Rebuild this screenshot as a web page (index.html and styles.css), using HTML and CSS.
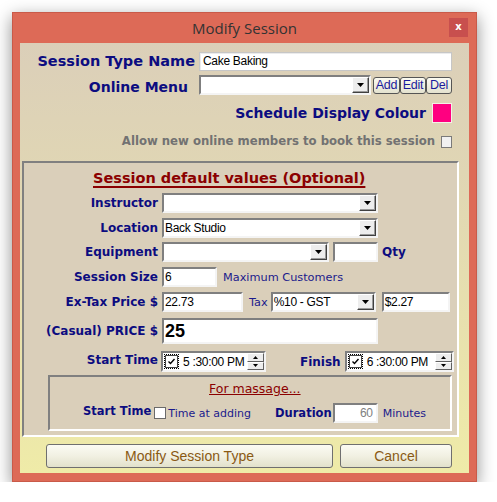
FILE: index.html
```html
<!DOCTYPE html>
<html>
<head>
<meta charset="utf-8">
<title>Modify Session</title>
<link rel="stylesheet" href="styles.css">
</head>
<body>
<div class="window">
  <div class="titlebar">
    <span class="tb-spacer"></span>
    <span class="tb-title">Modify Session</span>
    <span class="tb-close">x</span>
  </div>
  <div class="client">
    <div class="top">
      <div class="row r1">
        <span class="lbl big xl">Session Type Name</span>
        <div class="field flat w253">Cake Baking</div>
      </div>
      <div class="row r2">
        <span class="lbl big menu-lbl">Online Menu</span>
        <div class="combo w172"><span class="combo-text"></span><span class="ddbtn"><svg width="7" height="4" viewBox="0 0 7 4"><polygon points="0,0 7,0 3.5,4" fill="#000"/></svg></span></div>
        <div class="btngroup">
          <span class="sbtn w27">Add</span><span class="sbtn w26">Edit</span><span class="sbtn w26">Del</span>
        </div>
      </div>
      <div class="row r3">
        <span class="lbl big">Schedule Display Colour</span>
        <span class="swatch"></span>
      </div>
      <div class="row r4">
        <span class="lbl gray">Allow new online members to book this session</span>
        <span class="chk light"></span>
      </div>
    </div>

    <div class="group">
      <div class="g-title">Session default values (Optional)</div>

      <div class="frow mt5">
        <span class="flbl">Instructor</span>
        <div class="combo w216"><span class="combo-text"></span><span class="ddbtn"><svg width="7" height="4" viewBox="0 0 7 4"><polygon points="0,0 7,0 3.5,4" fill="#000"/></svg></span></div>
      </div>
      <div class="frow mt5">
        <span class="flbl">Location</span>
        <div class="combo w216"><span class="combo-text">Back Studio</span><span class="ddbtn"><svg width="7" height="4" viewBox="0 0 7 4"><polygon points="0,0 7,0 3.5,4" fill="#000"/></svg></span></div>
      </div>
      <div class="frow mt4">
        <span class="flbl">Equipment</span>
        <div class="combo w167"><span class="combo-text"></span><span class="ddbtn"><svg width="7" height="4" viewBox="0 0 7 4"><polygon points="0,0 7,0 3.5,4" fill="#000"/></svg></span></div>
        <div class="field w45 ml4"></div>
        <span class="slbl ml4">Qty</span>
      </div>
      <div class="frow mt5">
        <span class="flbl">Session Size</span>
        <div class="field w55">6</div>
        <span class="note ml6">Maximum Customers</span>
      </div>
      <div class="frow mt5">
        <span class="flbl">Ex-Tax Price $</span>
        <div class="field w81">22.73</div>
        <span class="note ml6">Tax</span>
        <div class="combo w105 ml3"><span class="combo-text">%10 - GST</span><span class="ddbtn"><svg width="7" height="4" viewBox="0 0 7 4"><polygon points="0,0 7,0 3.5,4" fill="#000"/></svg></span></div>
        <div class="field w68 ml6">$2.27</div>
      </div>
      <div class="frow mt6 h26">
        <span class="flbl">(Casual) PRICE $</span>
        <div class="field w216 h26 price">25</div>
      </div>
      <div class="frow mt7 h21">
        <span class="flbl tlbl">Start Time</span>
        <div class="picker w105">
          <span class="pchk"><svg width="9" height="9" viewBox="0 0 9 9"><polyline points="1.5,4.5 3.5,6.5 7.5,2" fill="none" stroke="#000" stroke-width="1.4"/></svg></span>
          <span class="ptext">5 :30:00 PM</span>
          <span class="spin"><span class="sp"><svg width="5" height="3" viewBox="0 0 5 3"><polygon points="0,3 5,3 2.5,0" fill="#000"/></svg></span><span class="sp"><svg width="5" height="3" viewBox="0 0 5 3"><polygon points="0,0 5,0 2.5,3" fill="#000"/></svg></span></span>
        </div>
        <span class="slbl finish">Finish</span>
        <div class="picker w109">
          <span class="pchk"><svg width="9" height="9" viewBox="0 0 9 9"><polyline points="1.5,4.5 3.5,6.5 7.5,2" fill="none" stroke="#000" stroke-width="1.4"/></svg></span>
          <span class="ptext">6 :30:00 PM</span>
          <span class="spin"><span class="sp"><svg width="5" height="3" viewBox="0 0 5 3"><polygon points="0,3 5,3 2.5,0" fill="#000"/></svg></span><span class="sp"><svg width="5" height="3" viewBox="0 0 5 3"><polygon points="0,0 5,0 2.5,3" fill="#000"/></svg></span></span>
        </div>
      </div>

      <div class="massage">
        <div class="m-title"><span>For massage...</span></div>
        <div class="mrow">
          <span class="slbl msl">Start Time</span>
          <span class="chk white ml3"></span>
          <span class="note mnote">Time at adding</span>
          <span class="slbl dur">Duration</span>
          <div class="field w45 h20 dim">60</div>
          <span class="note mnote ml5">Minutes</span>
        </div>
      </div>
    </div>

    <div class="buttons">
      <span class="btn w287">Modify Session Type</span>
      <span class="btn w112">Cancel</span>
    </div>
  </div>
</div>
</body>
</html>
```

FILE: styles.css
```css
* { box-sizing: border-box; }

body {
  margin: 0;
  background: #ffffff;
  font-family: "DejaVu Sans", sans-serif;
}

.window {
  margin: 12px 0 0 12px;
  width: 465px;
  height: 470px;
  background: #dd6a57;
  border: 1px solid #c95a49;
  padding: 0 7px 8px 7px;
  display: flex;
  flex-direction: column;
  box-shadow: 0 5px 16px rgba(0, 0, 0, 0.45);
}

.titlebar {
  height: 30px;
  display: grid;
  grid-template-columns: 20px 1fr 20px;
  align-items: start;
}

.tb-title {
  text-align: center;
  font-family: "Open Sans", "Noto Sans", sans-serif;
  font-size: 15px;
  line-height: 30px;
  color: #333333;
}

.tb-close {
  width: 19px;
  height: 19px;
  margin-top: 5px;
  background: #c84f4e;
  color: #ffffff;
  font-family: "DejaVu Sans", sans-serif;
  font-weight: bold;
  font-size: 10px;
  line-height: 18px;
  text-align: center;
}

.client {
  flex: 1;
  background: linear-gradient(to bottom, #dbcfb9 0%, #e0d6b4 30%, #efeba8 100%);
  padding: 9px 0 0 2px;
  display: flex;
  flex-direction: column;
}

.top {
  padding-right: 17px;
  display: flex;
  flex-direction: column;
}

.row {
  display: flex;
  justify-content: flex-end;
  align-items: center;
}

.r1 { height: 19px; }
.r2 { height: 20px; margin-top: 4px; }
.r3 { height: 20px; margin-top: 8px; }
.r4 { height: 12px; margin-top: 13px; }

.lbl {
  white-space: nowrap;
  line-height: 1;
}

.lbl.big {
  font-weight: bold;
  font-size: 14px;
  color: #0c0c80;
}

.lbl.big.xl { font-size: 14.5px; margin-right: 4px; }
.menu-lbl { margin-right: 11px; padding-top: 4px; }
.r3 .lbl { margin-right: 6px; }

.lbl.gray {
  font-weight: bold;
  font-size: 11.7px;
  color: #727272;
  margin-right: 6px;
}

.field {
  height: 20px;
  background: #ffffff;
  border: 2px solid;
  border-color: #7f7f7f #f4f4f4 #f4f4f4 #7f7f7f;
  font-family: "Liberation Sans", sans-serif;
  font-size: 12px;
  letter-spacing: -0.3px;
  color: #000000;
  line-height: 16px;
  padding-left: 1px;
  white-space: nowrap;
  overflow: hidden;
}

.field.flat {
  height: 19px;
  border: 1px solid #c6c6c6;
  box-shadow: inset 1px 1px 0 #ebebeb;
  padding-left: 3px;
  line-height: 17px;
}

.field.price {
  font-weight: bold;
  font-size: 18px;
  letter-spacing: 0;
  line-height: 22px;
  padding-left: 1px;
}

.field.dim {
  color: #808080;
  text-align: right;
  padding-right: 3px;
}

.combo {
  height: 20px;
  display: flex;
  background: #ffffff;
  border: 2px solid;
  border-color: #7f7f7f #f4f4f4 #f4f4f4 #7f7f7f;
}

.combo-text {
  flex: 1;
  font-family: "Liberation Sans", sans-serif;
  font-size: 12px;
  letter-spacing: -0.3px;
  line-height: 16px;
  padding-left: 1px;
  white-space: nowrap;
  overflow: hidden;
}

.ddbtn {
  width: 17px;
  background: #ededed;
  border: 1px solid;
  border-color: #ffffff #404040 #404040 #ffffff;
  box-shadow: inset -1px -1px 0 #9a9a9a;
  display: flex;
  align-items: center;
  justify-content: center;
}

.btngroup {
  display: flex;
  margin-left: 2px;
}

.sbtn {
  height: 17px;
  border: 1px solid #555555;
  border-radius: 3px;
  background: linear-gradient(to bottom, #fbfaf1, #e4e2cf);
  font-family: "Liberation Sans", sans-serif;
  font-size: 12.5px;
  letter-spacing: -0.3px;
  line-height: 15px;
  color: #1a1a9c;
  text-align: center;
}

.swatch {
  width: 20px;
  height: 20px;
  background: #ff0080;
  border: 1px solid #f4f0e6;
}

.chk {
  display: inline-block;
  width: 12px;
  height: 12px;
  border: 1px solid #7a7a7a;
}

.chk.light { background: #f1f1f1; width: 11px; }
.chk.white { background: #ffffff; border-color: #6a6a6a; }

.group {
  margin-top: 13px;
  width: 437px;
  height: 276px;
  background: #dacfba;
  border: 2px solid;
  border-color: #808080 #ffffff #ffffff #808080;
  display: flex;
  flex-direction: column;
}

.g-title {
  margin-top: 5px;
  height: 20px;
  line-height: 20px;
  padding-left: 69px;
  font-weight: bold;
  font-size: 14.5px;
  color: #8b0000;
  text-decoration: underline;
  text-decoration-thickness: 2px;
  text-underline-offset: 3px;
  white-space: nowrap;
}

.frow {
  display: flex;
  align-items: center;
  height: 20px;
}

.flbl {
  width: 134px;
  margin-right: 4px;
  text-align: right;
  font-weight: bold;
  font-size: 12px;
  color: #0c0c80;
  white-space: nowrap;
}

.tlbl { width: 134px; margin-right: 3px; padding-bottom: 4px; }

.slbl {
  font-weight: bold;
  font-size: 12px;
  color: #0c0c80;
  white-space: nowrap;
}

.msl { font-size: 11.5px; padding-bottom: 4px; }

.note {
  font-size: 11.3px;
  color: #1a1a8c;
  white-space: nowrap;
}

.mnote { font-size: 11px; margin-left: 2px; }

.finish { margin-left: 34px; margin-right: 4px; }

.mt4 { margin-top: 4px; }
.mt5 { margin-top: 5px; }
.mt6 { margin-top: 6px; }
.mt7 { margin-top: 7px; }
.ml3 { margin-left: 3px; }
.ml4 { margin-left: 4px; }
.ml5 { margin-left: 5px; }
.ml6 { margin-left: 6px; }
.h20 { height: 20px; }
.h21 { height: 21px; }
.h26 { height: 26px; }

.w26 { width: 26px; }
.w27 { width: 27px; }
.w45 { width: 45px; }
.w55 { width: 55px; }
.w68 { width: 68px; }
.w81 { width: 81px; }
.w105 { width: 105px; }
.w109 { width: 109px; }
.w112 { width: 112px; }
.w167 { width: 167px; }
.w172 { width: 172px; }
.w216 { width: 216px; }
.w253 { width: 253px; }
.w287 { width: 287px; }

.picker {
  height: 21px;
  background: #ffffff;
  border: 2px solid;
  border-color: #7f7f7f #f4f4f4 #f4f4f4 #7f7f7f;
  display: flex;
  align-items: center;
}

.pchk {
  width: 13px;
  height: 13px;
  margin-left: 2px;
  border: 1px solid #444444;
  outline: 1px dotted #000000;
  outline-offset: 0px;
  display: flex;
  align-items: center;
  justify-content: center;
}

.ptext {
  flex: 1;
  margin-left: 5px;
  font-family: "Liberation Sans", sans-serif;
  font-size: 12px;
  letter-spacing: -0.3px;
  color: #000000;
  white-space: nowrap;
}

.spin {
  width: 17px;
  height: 17px;
  display: flex;
  flex-direction: column;
}

.sp {
  flex: 1;
  background: #ededed;
  border: 1px solid;
  border-color: #ffffff #606060 #606060 #ffffff;
  display: flex;
  align-items: center;
  justify-content: center;
}

.massage {
  margin-top: 3px;
  margin-left: 24px;
  width: 404px;
  height: 56px;
  border: 2px solid;
  border-color: #808080 #ffffff #ffffff #808080;
  display: flex;
  flex-direction: column;
}

.m-title {
  height: 18px;
  margin-top: 2px;
  padding-left: 159px;
  line-height: 18px;
}

.m-title span {
  font-size: 12.5px;
  color: #8b0000;
  text-decoration: underline;
  white-space: nowrap;
}

.mrow {
  margin-top: 6px;
  height: 20px;
  padding-left: 33px;
  display: flex;
  align-items: center;
}

.dur { font-size: 11.5px; margin-left: 24px; margin-right: 1px; }

.buttons {
  margin-top: 7px;
  padding-left: 24px;
  display: flex;
  gap: 7px;
}

.btn {
  height: 24px;
  border: 1px solid #6f6f6f;
  border-radius: 3px;
  background: linear-gradient(to bottom, #fbfbf3 0%, #f1f0e2 50%, #e2e1cb 100%);
  font-family: "Liberation Sans", sans-serif;
  font-size: 14px;
  line-height: 22px;
  color: #8a5a14;
  text-align: center;
}
```
